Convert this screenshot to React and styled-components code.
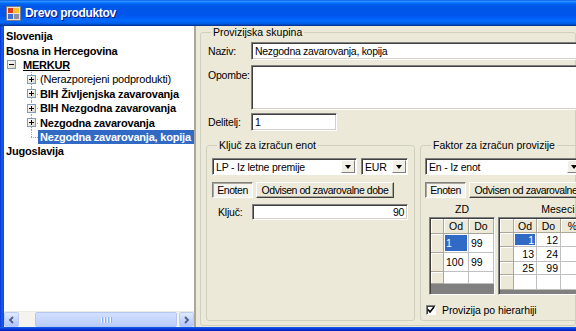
import React from 'react'
import styled, { createGlobalStyle } from 'styled-components'

const GlobalStyle = createGlobalStyle`
  html, body {
    margin: 0;
    padding: 0;
  }
  body {
    font-family: "Liberation Sans", Arial, sans-serif;
    background: #ECE9D8;
  }
  * {
    box-sizing: border-box;
  }
`

const Window = styled.div`
  width: 576px;
  height: 331px;
  display: flex;
  flex-direction: column;
  overflow: hidden;
  background: #ECE9D8;
`

const TitleBar = styled.div`
  height: 26px;
  flex: none;
  display: flex;
  align-items: center;
  gap: 4px;
  padding-left: 6px;
  background: linear-gradient(to bottom, #0058EE 0%, #3593FF 5%, #127DFF 9%, #036FFC 12%, #0262EE 16%, #0057E5 24%, #0055EB 56%, #005BF5 66%, #026AFE 78%, #0062EF 88%, #0052D6 93%, #0040AB 96%, #003092 100%);
`

const TitleText = styled.span`
  color: #fff;
  font-weight: bold;
  font-size: 12px;
  letter-spacing: -0.35px;
  text-shadow: 1px 1px #0A1883;
`

const Body = styled.div`
  flex: 1;
  min-height: 0;
  display: flex;
`

const FrameEdge = styled.div`
  width: 4px;
  flex: none;
  background: linear-gradient(to right, #0831D9, #1660E8 50%, #0846E0);
`

const FrameBottom = styled.div`
  height: 4px;
  flex: none;
  background: linear-gradient(to bottom, #1660E8, #0831D9 60%, #001EA0);
`

const TreePane = styled.div`
  width: 192px;
  flex: none;
  display: flex;
  flex-direction: column;
  background: #fff;
  border-right: 2px solid #ACA899;
`

const TreeList = styled.div`
  flex: 1;
  padding-top: 3px;
  overflow: hidden;
`

const TreeRow = styled.div`
  position: relative;
  height: 14.4px;
  display: flex;
  align-items: center;
  padding-left: ${p => p.$indent}px;
  white-space: nowrap;
`

const Slot = styled.span`
  position: relative;
  width: 9px;
  height: 14.4px;
  flex: none;
  display: flex;
  align-items: center;
  margin-right: ${p => p.$gap}px;

  &::before {
    content: '';
    display: ${p => (p.$line ? 'block' : 'none')};
    position: absolute;
    left: 4px;
    top: 0;
    height: ${p => (p.$last ? '50%' : '100%')};
    border-left: 1px dotted #A0A0A0;
  }
  &::after {
    content: '';
    display: ${p => (p.$line ? 'block' : 'none')};
    position: absolute;
    left: 4px;
    top: 50%;
    width: 7px;
    border-top: 1px dotted #A0A0A0;
  }
`

const NodeLabel = styled.span`
  padding: 1px 2px;
  font-size: 11px;
  line-height: 12px;
  letter-spacing: -0.2px;
  font-weight: ${p => (p.$bold ? 'bold' : 'normal')};
  text-decoration: ${p => (p.$underline ? 'underline' : 'none')};
  color: ${p => (p.$selected ? '#fff' : '#000')};
  background: ${p => (p.$selected ? '#316AC5' : 'transparent')};
  flex: ${p => (p.$selected ? '1' : 'none')};
`

const HScrollbar = styled.div`
  height: 16px;
  flex: none;
  display: flex;
  background: #F4F3EE;
  border-top: 1px solid #EEEDE5;
`

const ScrollArrow = styled.div`
  width: 15px;
  flex: none;
  display: flex;
  align-items: center;
  justify-content: center;
  border: 1px solid #BBCBF3;
  border-radius: 2px;
  background: linear-gradient(to bottom, #E1EAFE, #C3D3FD 60%, #B3C6F8);
`

const ScrollTrack = styled.div`
  flex: 1;
  display: flex;
  padding: 0 2px 0 16px;
`

const Thumb = styled.div`
  flex: 1;
  display: flex;
  align-items: center;
  justify-content: center;
  gap: 1px;
  border: 1px solid #B4C7F3;
  border-radius: 2px;
  background: linear-gradient(to bottom, #D3E0FD, #C6D6FC 50%, #B9CCFA);
`

const Grip = styled.span`
  width: 1px;
  height: 6px;
  background: #EEF3FE;
  box-shadow: 1px 0 #8CB0F8;
  margin-right: 1px;
`

const Splitter = styled.div`
  width: 4px;
  flex: none;
`

const DetailPane = styled.div`
  flex: 1;
  min-width: 0;
  display: flex;
  flex-direction: column;
  overflow: hidden;
  padding-bottom: 1px;
`

const Group = styled.fieldset`
  margin: 0;
  padding: 0;
  min-width: 0;
  border: 1px solid #D0D0BF;
  border-radius: 3px;
  flex: ${p => (p.$grow ? '1' : 'none')};
  width: ${p => (p.$w ? `${p.$w}px` : 'auto')};
  height: ${p => (p.$h ? `${p.$h}px` : 'auto')};
`

const Legend = styled.legend`
  margin-left: 10px;
  padding: 0 2px;
  font-size: 10.5px;
  line-height: 13px;
  color: #000;
`

const GroupBody = styled.div`
  padding: ${p => p.$pad};
  font-size: 10.5px;
`

const FieldRow = styled.div`
  display: flex;
  align-items: ${p => (p.$top ? 'flex-start' : 'center')};
  margin-top: ${p => p.$mt}px;
`

const FieldLabel = styled.span`
  width: ${p => p.$w || 45}px;
  flex: none;
  padding-left: ${p => p.$pl ?? 2}px;
  padding-top: ${p => (p.$top ? 4 : 0)}px;
  font-size: 10.5px;
  letter-spacing: -0.2px;
  color: #000;
`

const TextBox = styled.div`
  width: ${p => p.$w}px;
  height: ${p => p.$h}px;
  flex: none;
  display: flex;
  align-items: ${p => (p.$multi ? 'flex-start' : 'center')};
  justify-content: ${p => (p.$right ? 'flex-end' : 'flex-start')};
  padding: 0 3px;
  background: #fff;
  border: 1px solid;
  border-color: #808080 #fff #fff #808080;
  box-shadow: inset 1px 1px #404040, inset -1px -1px #D4D0C8;
  font-size: 10.5px;
  letter-spacing: -0.3px;
  white-space: nowrap;
`

const GroupsRow = styled.div`
  display: flex;
  gap: 5px;
  margin-top: 8px;
`

const ControlRow = styled.div`
  display: flex;
  align-items: center;
  gap: ${p => p.$gap ?? 4}px;
  margin-top: ${p => p.$mt ?? 0}px;
`

const SelectBox = styled.div`
  width: ${p => p.$w}px;
  height: 17px;
  flex: none;
  display: flex;
  align-items: stretch;
  background: #fff;
  border: 1px solid;
  border-color: #808080 #fff #fff #808080;
  box-shadow: inset 1px 1px #404040;
  padding: 1px;
`

const SelectText = styled.span`
  flex: 1;
  display: flex;
  align-items: center;
  padding-left: 2px;
  font-size: 10.5px;
  letter-spacing: -0.2px;
  white-space: nowrap;
  overflow: hidden;
`

const DropButton = styled.span`
  width: 14px;
  flex: none;
  display: flex;
  align-items: center;
  justify-content: center;
  background: #F1EFE6;
  border: 1px solid;
  border-color: #fff #808080 #808080 #fff;

  &::after {
    content: '';
    border-left: 3.5px solid transparent;
    border-right: 3.5px solid transparent;
    border-top: 4px solid #000;
  }
`

const Button = styled.div`
  width: ${p => p.$w}px;
  height: 16px;
  flex: none;
  display: flex;
  align-items: center;
  justify-content: center;
  font-size: 10.5px;
  letter-spacing: -0.45px;
  white-space: nowrap;
  overflow: hidden;
  background: ${p => (p.$pressed ? '#F4F3EE' : '#ECE9D8')};
  border: 1px solid;
  border-color: ${p => (p.$pressed ? '#808080 #fff #fff #808080' : '#fff #404040 #404040 #fff')};
  box-shadow: ${p => (p.$pressed ? 'inset 1px 1px #ACA899' : 'inset -1px -1px #ACA899')};
`

const GridsRow = styled.div`
  display: flex;
  gap: 3px;
  padding-left: 4px;
  margin-top: 5px;
`

const GridColumn = styled.div`
  width: ${p => p.$w}px;
  flex: none;
  display: flex;
  flex-direction: column;
`

const GridCaption = styled.div`
  height: 13px;
  margin-bottom: 1px;
  text-align: center;
  font-size: 10.5px;
  line-height: 13px;
  white-space: nowrap;
`

const DataGrid = styled.div`
  height: 78px;
  display: grid;
  grid-template-columns: ${p => p.$cols};
  grid-template-rows: ${p => p.$rows};
  align-content: start;
  background: #808080;
  border: 1px solid;
  border-color: #808080 #fff #fff #808080;
  box-shadow: inset 1px 1px #404040;
  padding: 1px 0 0 1px;
  overflow: hidden;
`

const Cell = styled.div`
  display: flex;
  align-items: center;
  justify-content: ${p => (p.$head ? 'center' : p.$right ? 'flex-end' : 'flex-start')};
  padding: 0 2px;
  font-size: 10.5px;
  white-space: nowrap;
  overflow: hidden;
  color: ${p => (p.$sel ? '#fff' : '#000')};
  background: ${p => (p.$head ? '#ECE9D8' : p.$sel ? '#316AC5' : '#fff')};
  border-right: 1px solid ${p => (p.$head ? '#ACA899' : '#C0C0C0')};
  border-bottom: 1px solid ${p => (p.$head ? '#ACA899' : '#C0C0C0')};
  box-shadow: ${p => (p.$head ? 'inset 1px 1px #fff' : p.$sel ? 'inset 0 0 0 1px #fff' : 'none')};
`

const CheckRow = styled.div`
  display: flex;
  align-items: center;
  gap: 6px;
  margin-top: 8px;
  padding-left: 1px;
  height: 13px;
  font-size: 10.5px;
  letter-spacing: -0.1px;
`

const CheckBox = styled.span`
  width: 10px;
  height: 10px;
  flex: none;
  display: flex;
  background: #fff;
  border: 1px solid;
  border-color: #808080 #fff #fff #808080;
  box-shadow: inset 1px 1px #404040;
`

const treeItems = [
  { label: 'Slovenija', indent: 0, bold: true },
  { label: 'Bosna in Hercegovina', indent: 0, bold: true },
  { label: 'MERKUR', indent: 3, gap: 5, bold: true, underline: true, exp: 'minus' },
  { label: '(Nerazporejeni podprodukti)', indent: 23, gap: 2, exp: 'plus', line: true },
  { label: 'BIH Življenjska zavarovanja', indent: 23, gap: 2, bold: true, exp: 'plus', line: true },
  { label: 'BIH Nezgodna zavarovanja', indent: 23, gap: 2, bold: true, exp: 'plus', line: true },
  { label: 'Nezgodna zavarovanja', indent: 23, gap: 2, bold: true, exp: 'plus', line: true },
  { label: 'Nezgodna zavarovanja, kopija', indent: 23, gap: 2, bold: true, selected: true, line: true, last: true },
  { label: 'Jugoslavija', indent: 0, bold: true },
]

const zdCols = ['', 'Od', 'Do']
const zdRows = [
  [{ v: '' }, { v: '1', sel: true }, { v: '99' }],
  [{ v: '' }, { v: '100' }, { v: '99' }],
  [{ v: '' }, { v: '' }, { v: '' }],
]

const mesCols = ['', 'Od', 'Do', '%', '', '', '']
const mesRows = [
  ['', '1', '12', '', '', '', ''],
  ['', '13', '24', '', '', '', ''],
  ['', '25', '99', '', '', '', ''],
  ['', '', '', '', '', '', ''],
]

const AppIcon = () => (
  <svg width="15" height="15" viewBox="0 0 15 15">
    <rect x="0.5" y="0.5" width="14" height="14" fill="#E8E4DA" stroke="#7A7A8A" />
    <rect x="2" y="2" width="5" height="5" fill="#E03A1E" />
    <rect x="8" y="2" width="5" height="5" fill="#F6C12B" />
    <rect x="2" y="8" width="5" height="5" fill="#3A6FD8" />
    <rect x="8" y="8" width="5" height="5" fill="#8E8E9E" />
  </svg>
)

const Expander = ({ type }) => (
  <svg width="9" height="9" viewBox="0 0 9 9" style={{ position: 'relative', zIndex: 1 }}>
    <defs>
      <linearGradient id={`exp-${type}`} x1="0" y1="0" x2="1" y2="1">
        <stop offset="0" stopColor="#fff" />
        <stop offset="1" stopColor="#D8D4C4" />
      </linearGradient>
    </defs>
    <rect x="0.5" y="0.5" width="8" height="8" fill={`url(#exp-${type})`} stroke="#7F9DB9" />
    <line x1="2" y1="4.5" x2="7" y2="4.5" stroke="#000" />
    {type === 'plus' && <line x1="4.5" y1="2" x2="4.5" y2="7" stroke="#000" />}
  </svg>
)

const Chevron = ({ dir }) => (
  <svg width="7" height="8" viewBox="0 0 7 8">
    <polyline
      points={dir === 'left' ? '5,1 2,4 5,7' : '2,1 5,4 2,7'}
      fill="none"
      stroke="#4D6185"
      strokeWidth="1.8"
    />
  </svg>
)

const Check = () => (
  <svg width="8" height="8" viewBox="0 0 8 8">
    <polyline points="1,3.5 3,6 7,1" fill="none" stroke="#000" strokeWidth="1.6" />
  </svg>
)

export default function App() {
  return (
    <>
      <GlobalStyle />
      <Window>
        <TitleBar>
          <AppIcon />
          <TitleText>Drevo produktov</TitleText>
        </TitleBar>
        <Body>
          <FrameEdge />
          <TreePane>
            <TreeList>
              {treeItems.map(item => (
                <TreeRow key={item.label} $indent={item.indent}>
                  {(item.exp || item.line) && (
                    <Slot $gap={item.gap} $line={item.line} $last={item.last}>
                      {item.exp && <Expander type={item.exp} />}
                    </Slot>
                  )}
                  <NodeLabel
                    $bold={item.bold}
                    $underline={item.underline}
                    $selected={item.selected}
                  >
                    {item.label}
                  </NodeLabel>
                </TreeRow>
              ))}
            </TreeList>
            <HScrollbar>
              <ScrollArrow>
                <Chevron dir="left" />
              </ScrollArrow>
              <ScrollTrack>
                <Thumb>
                  <Grip />
                  <Grip />
                  <Grip />
                  <Grip />
                </Thumb>
              </ScrollTrack>
              <ScrollArrow>
                <Chevron dir="right" />
              </ScrollArrow>
            </HScrollbar>
          </TreePane>
          <Splitter />
          <DetailPane>
            <Group $grow>
              <Legend>Provizijska skupina</Legend>
              <GroupBody $pad="0 0 4px 5px">
                <FieldRow $mt={3}>
                  <FieldLabel>Naziv:</FieldLabel>
                  <TextBox $w={340} $h={18}>Nezgodna zavarovanja, kopija</TextBox>
                </FieldRow>
                <FieldRow $mt={5} $top>
                  <FieldLabel $top>Opombe:</FieldLabel>
                  <TextBox $w={340} $h={45} $multi />
                </FieldRow>
                <FieldRow $mt={3}>
                  <FieldLabel>Delitelj:</FieldLabel>
                  <TextBox $w={86} $h={18}>1</TextBox>
                </FieldRow>

                <GroupsRow>
                  <Group $w={209} $h={182}>
                    <Legend>Ključ za izračun enot</Legend>
                    <GroupBody $pad="6px 7px 0 5px">
                      <ControlRow>
                        <SelectBox $w={145}>
                          <SelectText>LP - Iz letne premije</SelectText>
                          <DropButton />
                        </SelectBox>
                        <SelectBox $w={47}>
                          <SelectText>EUR</SelectText>
                          <DropButton />
                        </SelectBox>
                      </ControlRow>
                      <ControlRow $mt={7} $gap={3}>
                        <Button $w={41} $pressed>Enoten</Button>
                        <Button $w={138}>Odvisen od zavarovalne dobe</Button>
                      </ControlRow>
                      <FieldRow $mt={6}>
                        <FieldLabel $w={40} $pl={6}>Ključ:</FieldLabel>
                        <TextBox $w={156} $h={16} $right>90</TextBox>
                      </FieldRow>
                    </GroupBody>
                  </Group>

                  <Group $w={200} $h={182}>
                    <Legend>Faktor za izračun provizije</Legend>
                    <GroupBody $pad="6px 0 0 4px">
                      <ControlRow>
                        <SelectBox $w={158}>
                          <SelectText>En - Iz enot</SelectText>
                          <DropButton />
                        </SelectBox>
                      </ControlRow>
                      <ControlRow $mt={7} $gap={3}>
                        <Button $w={41} $pressed>Enoten</Button>
                        <Button $w={138}>Odvisen od zavarovalne dobe</Button>
                      </ControlRow>
                      <GridsRow>
                        <GridColumn $w={66}>
                          <GridCaption>ZD</GridCaption>
                          <DataGrid $cols="13px 25px 25px" $rows="15px 19px 19px 12px">
                            {zdCols.map((c, i) => (
                              <Cell key={`h${i}`} $head>{c}</Cell>
                            ))}
                            {zdRows.map((row, r) =>
                              row.map((cell, i) => (
                                <Cell key={`${r}-${i}`} $head={i === 0} $sel={cell.sel}>
                                  {cell.v}
                                </Cell>
                              ))
                            )}
                          </DataGrid>
                        </GridColumn>
                        <GridColumn $w={160}>
                          <GridCaption>Meseci izplačila</GridCaption>
                          <DataGrid
                            $cols="14px 23px 24px 24px 24px 24px 24px"
                            $rows="14px 14px 15px 13px 15px"
                          >
                            {mesCols.map((c, i) => (
                              <Cell key={`h${i}`} $head>{c}</Cell>
                            ))}
                            {mesRows.map((row, r) =>
                              row.map((v, i) => (
                                <Cell
                                  key={`${r}-${i}`}
                                  $head={i === 0}
                                  $right
                                  $sel={r === 0 && i === 1}
                                >
                                  {v}
                                </Cell>
                              ))
                            )}
                          </DataGrid>
                        </GridColumn>
                      </GridsRow>
                      <CheckRow>
                        <CheckBox>
                          <Check />
                        </CheckBox>
                        Provizija po hierarhiji
                      </CheckRow>
                    </GroupBody>
                  </Group>
                </GroupsRow>
              </GroupBody>
            </Group>
          </DetailPane>
        </Body>
        <FrameBottom />
      </Window>
    </>
  )
}
